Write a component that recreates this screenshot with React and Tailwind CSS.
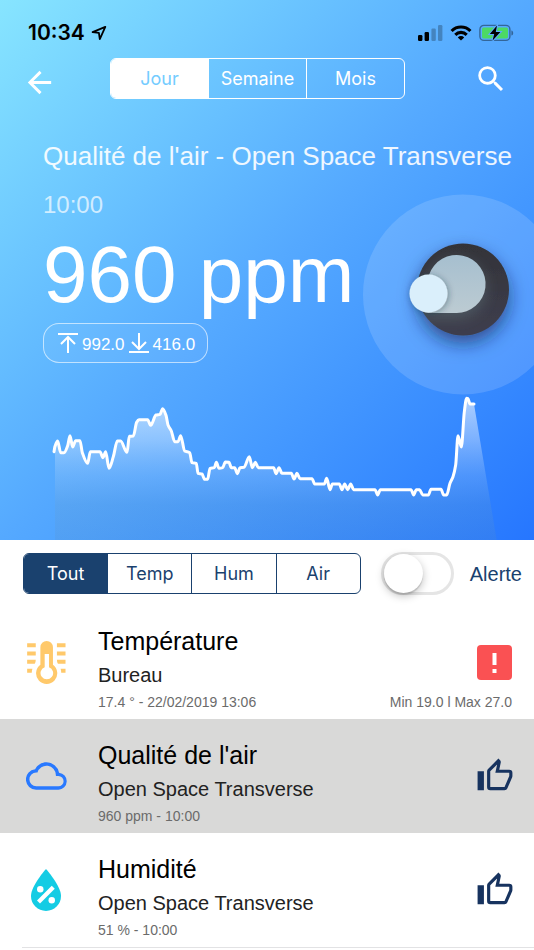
import { useState } from "react";
import { MdArrowBack, MdSearch } from "react-icons/md";
import clsx from "clsx";

// CO2 readings over the day, in chart units (3 units = 1px at full width)
const READINGS = [
  [162, 200], [165, 184], [173, 168], [182, 203], [192, 203], [203, 182], [210, 152], [218, 186], [227, 167],
  [240, 167], [247, 203], [263, 235], [271, 200], [300, 200], [309, 218], [317, 200], [327, 250], [340, 215],
  [352, 168], [362, 168], [381, 202], [388, 154], [400, 153], [410, 112], [417, 104], [443, 104], [452, 121],
  [468, 90], [480, 88], [488, 71], [498, 91], [504, 120], [514, 138], [524, 170], [534, 170], [542, 152],
  [554, 198], [569, 203], [576, 233], [589, 235], [594, 265], [606, 267], [614, 283], [623, 283], [630, 250],
  [643, 248], [649, 232], [657, 250], [668, 248], [676, 231], [687, 232], [694, 248], [704, 248], [712, 266],
  [720, 248], [732, 247], [748, 215], [757, 248], [766, 232], [775, 248], [821, 248], [828, 266], [837, 248],
  [846, 265], [874, 265], [882, 282], [891, 265], [900, 281], [936, 281], [944, 297], [973, 297], [980, 280],
  [990, 314], [997, 297], [1018, 297], [1026, 314], [1034, 297], [1043, 314], [1052, 297], [1061, 314],
  [1125, 314], [1133, 330], [1141, 314], [1233, 314], [1241, 330], [1249, 314], [1259, 314], [1268, 330],
  [1285, 330], [1293, 313], [1323, 313], [1331, 330], [1340, 330], [1350, 295], [1359, 275], [1367, 240],
  [1374, 152], [1384, 186], [1393, 80], [1400, 40], [1404, 41], [1410, 57], [1422, 57],
];

// Monotone cubic through every point, so flat stretches stay flat
function smoothPath(points) {
  const slope = points.slice(1).map((p, i) => (p[1] - points[i][1]) / (p[0] - points[i][0]));
  const tangent = points.map((_, i) => {
    const a = slope[i - 1];
    const b = slope[i];
    if (a === undefined) return b;
    if (b === undefined) return a;
    return a * b <= 0 ? 0 : (2 * a * b) / (a + b);
  });
  let d = `M${points[0][0]} ${points[0][1]}`;
  for (let i = 1; i < points.length; i++) {
    const [x0, y0] = points[i - 1];
    const [x1, y1] = points[i];
    const h = (x1 - x0) / 3;
    d += `C${x0 + h} ${y0 + tangent[i - 1] * h} ${x1 - h} ${y1 - tangent[i] * h} ${x1} ${y1}`;
  }
  return d;
}

const LINE = smoothPath(READINGS);

function Chart() {
  return (
    <svg viewBox="0 0 1602 465" className="block w-full" role="img" aria-label="CO2">
      <defs>
        <linearGradient id="area" x1="0" y1="40" x2="0" y2="465" gradientUnits="userSpaceOnUse">
          <stop offset="0" stopColor="#fff" stopOpacity="0.6" />
          <stop offset="0.3" stopColor="#eef5ff" stopOpacity="0.38" />
          <stop offset="0.55" stopColor="#a8cdf2" stopOpacity="0.24" />
          <stop offset="0.75" stopColor="#6a9fcb" stopOpacity="0.22" />
          <stop offset="1" stopColor="#5a8fc0" stopOpacity="0.18" />
        </linearGradient>
      </defs>
      <path d={`${LINE}L1490 465H165V200Z`} fill="url(#area)" />
      <path d={LINE} fill="none" stroke="#fff" strokeWidth="9" strokeLinecap="round" strokeLinejoin="round" />
    </svg>
  );
}

function StatusBar() {
  return (
    <div className="flex items-center justify-between pt-5 pr-5 pl-7 text-black">
      <div className="flex items-center gap-1.5">
        <span className="font-[Inter,sans-serif] text-[21px] leading-[26px] font-semibold">10:34</span>
        <svg width="16" height="16" viewBox="0 0 16 16" fill="none" stroke="currentColor" strokeWidth="1.8" strokeLinejoin="round">
          <path d="M14.3 1.8 1.6 7.2l6.3.7.9 6.2z" />
        </svg>
      </div>
      <div className="flex items-center gap-[7px]">
        <svg width="25" height="16" viewBox="0 0 25 16" fill="currentColor">
          <rect x="0" y="10" width="4.4" height="6" rx="1.2" />
          <rect x="6.6" y="7" width="4.4" height="9" rx="1.2" />
          <rect x="13.4" y="3.5" width="4.4" height="12.5" rx="1.2" opacity="0.25" />
          <rect x="20" y="0" width="4.4" height="16" rx="1.2" opacity="0.25" />
        </svg>
        <svg width="22" height="16" viewBox="0 0 22 16" fill="none" stroke="currentColor" strokeWidth="3.1">
          <path d="M1.6 6a13.2 13.2 0 0 1 18.8 0" />
          <path d="M5.3 9.8a8 8 0 0 1 11.4 0" />
          <path d="M11 15.6 7.8 12.4a4.6 4.6 0 0 1 6.4 0z" fill="currentColor" stroke="none" />
        </svg>
        <svg width="35" height="18" viewBox="0 0 35 18">
          <rect x="0.9" y="1.4" width="30" height="15" rx="4" fill="none" stroke="#000" strokeOpacity="0.4" strokeWidth="1.4" />
          <path d="M32.4 6.4c2.4.6 2.4 4.6 0 5.2z" fill="#000" fillOpacity="0.4" />
          <rect x="3" y="3.4" width="26" height="11" rx="1.6" fill="#4cd964" />
          <path d="M18 1.6 10.8 10h4.4l-1.6 6.6L21.4 8h-4.6z" fill="#000" stroke="#5aabff" strokeWidth="2" paintOrder="stroke" />
        </svg>
      </div>
    </div>
  );
}

// Ring with the night/day knob that bleeds off the right edge
function Dial() {
  return (
    <svg
      className="pointer-events-none absolute top-[194px] -right-[29px]"
      width="200"
      height="201"
      viewBox="0 0 200 201"
      aria-hidden="true"
    >
      <defs>
        <linearGradient id="dark" x1="0" y1="0" x2="0" y2="1">
          <stop offset="0" stopColor="#333338" />
          <stop offset="1" stopColor="#3e3e4e" />
        </linearGradient>
        <linearGradient id="haze" x1="0" y1="0" x2="0" y2="1">
          <stop offset="0" stopColor="#a6bfcf" />
          <stop offset="1" stopColor="#bccbd2" />
        </linearGradient>
        <filter id="drop" x="-40%" y="-40%" width="180%" height="200%">
          <feDropShadow dx="0" dy="8" stdDeviation="9" floodColor="#0a1e46" floodOpacity="0.6" />
        </filter>
        <filter id="glow" x="-40%" y="-40%" width="180%" height="180%">
          <feDropShadow dx="0" dy="5" stdDeviation="7" floodColor="#5c6f74" floodOpacity="0.55" />
        </filter>
        <filter id="soft" x="-40%" y="-40%" width="180%" height="180%">
          <feDropShadow dx="1" dy="1" stdDeviation="3" floodColor="#1e2d3c" floodOpacity="0.4" />
        </filter>
        <clipPath id="disc">
          <circle cx="100" cy="96" r="46" />
          <path d="M54 60h46v59H64z" />
        </clipPath>
      </defs>
      <circle cx="100" cy="100.5" r="100" fill="#fff" fillOpacity="0.14" />
      <circle cx="100" cy="95.5" r="46" fill="url(#dark)" filter="url(#drop)" />
      <g clipPath="url(#disc)">
        <path d="M66 119a19 19 0 0 1 0-38 29 29 0 1 1 27 38z" fill="url(#haze)" filter="url(#glow)" />
      </g>
      <circle cx="65.5" cy="99.5" r="19" fill="#daeffb" filter="url(#soft)" />
    </svg>
  );
}

function Thermometer() {
  return (
    <svg width="39" height="43" viewBox="0 0 117 130" fill="#ffc96b">
      <path d="M0 7h26v12H0zM0 32h26v12H0zM0 57h26q0 8-3 12H0zM0 84h16q-2 5-2 12H0z" />
      <path d="M90 7h26v12H90zM90 32h26v12H90zM90 57h26v12H93q-3-4-3-12zM101 84h15v12h-13q0-7-2-12z" />
      <path
        fillRule="evenodd"
        d="M40 19a19 19 0 0 1 38 0v53a32 32 0 1 1-38 0zM53 39v40a19 19 0 1 0 13 0V39z"
      />
    </svg>
  );
}

function Cloud() {
  return (
    <svg width="41" height="28" viewBox="0 4 24 16" fill="#2979ff">
      <path d="M19 18H6a4 4 0 0 1 0-8h.71a5.5 5.5 0 0 1 10.79 1.5v.5H19a3 3 0 0 1 0 6m.35-7.97A7.49 7.49 0 0 0 12 4C9.11 4 6.6 5.64 5.35 8.03A6 6 0 0 0 6 20h13a5 5 0 0 0 .35-9.97z" />
    </svg>
  );
}

function Drop() {
  return (
    <svg width="30" height="42" viewBox="6 3.25 12 16.75">
      <path d="M12 3.25S6 10 6 14a6 6 0 0 0 12 0c0-4-6-10.75-6-10.75z" fill="#14cce4" />
      <g fill="#fff">
        <path d="m14.3 9.9 1.2 1.2-5.9 5.9-1.2-1.2z" />
        <circle cx="9.7" cy="11.3" r="1.3" />
        <circle cx="14.3" cy="15.7" r="1.3" />
      </g>
    </svg>
  );
}

function ThumbUp() {
  return (
    <svg width="38" height="38" viewBox="0 0 24 24" fill="#17335f" className="-mr-0.5" role="img" aria-label="OK">
      <path d="M5 9v12H1V9h4m4 12a2 2 0 0 1-2-2V9c0-.55.22-1.05.59-1.41L14.17 1l1.06 1.06c.27.27.44.64.44 1.05l-.03.32L14.69 8H21a2 2 0 0 1 2 2v2c0 .26-.05.5-.14.73l-3.02 7.05C19.54 20.5 18.83 21 18 21H9m0-2h9.03L21 12v-2h-8.79l1.13-5.32L9 9.03V19z" />
    </svg>
  );
}

function Warning() {
  return (
    <svg width="35" height="35" viewBox="0 0 35 35" role="img" aria-label="Alerte">
      <rect width="35" height="35" rx="4" fill="#fa5153" />
      <path d="M15.5 8h4v12h-4zM15.5 24h4v4h-4z" fill="#fff" />
    </svg>
  );
}

function ToTop({ flip }) {
  return (
    <svg
      width="20"
      height="20"
      viewBox="0 0 20 20"
      fill="none"
      stroke="currentColor"
      strokeWidth="2"
      className={clsx("shrink-0", flip && "rotate-180")}
    >
      <path d="M0 1h20M10 20V4M3 11l7-7 7 7" />
    </svg>
  );
}

const SENSORS = [
  { id: "temp", name: "Température", place: "Bureau", meta: "17.4 ° - 22/02/2019 13:06", range: "Min 19.0 l Max 27.0", Icon: Thermometer, Status: Warning },
  { id: "air", name: "Qualité de l'air", place: "Open Space Transverse", meta: "960 ppm - 10:00", Icon: Cloud, Status: ThumbUp },
  { id: "hum", name: "Humidité", place: "Open Space Transverse", meta: "51 % - 10:00", Icon: Drop, Status: ThumbUp },
];

function SensorRow({ sensor, selected, onSelect }) {
  const { name, place, meta, range, Icon, Status } = sensor;
  return (
    <li>
      <button
        type="button"
        onClick={onSelect}
        className={clsx(
          "grid w-full grid-cols-[76px_1fr_auto] pr-[22px] pl-[22px] text-left",
          selected ? "bg-[#d9d9d8]" : "bg-white"
        )}
      >
        <span className="col-start-1 row-span-3 row-start-1 flex w-12 items-center justify-center self-stretch">
          <Icon />
        </span>
        <span className="col-start-2 row-start-1 pt-5 text-[25px] leading-8 text-black">{name}</span>
        <span className="col-start-2 row-start-2 text-[20px] leading-9 text-[#222]">{place}</span>
        <span className="col-start-2 row-start-3 pb-2 text-[14px] leading-[18px] text-[#6b6b6b]">{meta}</span>
        <span className="col-start-3 row-span-3 row-start-1 self-center justify-self-end">
          <Status />
        </span>
        {range && (
          <span className="col-start-3 row-start-3 text-[14px] leading-[18px] text-[#6b6b6b]">{range}</span>
        )}
      </button>
    </li>
  );
}

export default function App() {
  const [period, setPeriod] = useState("Jour");
  const [filter, setFilter] = useState("Tout");
  const [alert, setAlert] = useState(false);
  const [selected, setSelected] = useState("air");

  return (
    <div className="min-h-screen overflow-hidden bg-white font-['Liberation_Sans',Arial,sans-serif]">
      <section className="relative overflow-hidden bg-linear-to-br from-[#87e5ff] via-[#55a9ff] to-[#2676ff] text-white">
        <Dial />
        <StatusBar />

        <header className="mt-[11px] flex items-center pr-[26px] pl-[22px]">
          <button type="button" aria-label="Retour" className="mt-2">
            <MdArrowBack size={35} />
          </button>
          <div className="mr-[69px] ml-[53px] flex h-[41px] flex-1 overflow-hidden rounded-md border border-white font-[Inter,sans-serif] text-[18px]">
            {["Jour", "Semaine", "Mois"].map((label) => (
              <button
                key={label}
                type="button"
                onClick={() => setPeriod(label)}
                className={clsx(
                  "flex-1 border-l border-white first:border-l-0",
                  period === label ? "bg-white text-[#74ccff]" : "text-white"
                )}
              >
                {label}
              </button>
            ))}
          </div>
          <button type="button" aria-label="Rechercher">
            <MdSearch size={34} />
          </button>
        </header>

        <div className="mt-[39px] pl-[43px]">
          <h1 className="text-[26px] leading-[34px] whitespace-nowrap text-white/90">
            Qualité de l'air - Open Space Transverse
          </h1>
          <p className="mt-4 text-[24px] leading-8 text-white/70">10:00</p>
          <p className="mt-1.5 text-[80px] leading-[96px]">960 ppm</p>
          <div className="inline-flex h-10 items-center rounded-2xl border border-white/60 bg-white/5 pr-2 pl-3.5 align-top text-[17px]">
            <ToTop />
            <span className="px-1 pt-1">992.0</span>
            <ToTop flip />
            <span className="px-1 pt-1">416.0</span>
          </div>
        </div>

        <div className="mt-[22px]">
          <Chart />
        </div>
      </section>

      <div className="flex items-center pt-3 pr-3 pb-2.5 pl-[23px] text-[#1a416e]">
        <div className="flex h-[41px] flex-1 overflow-hidden rounded-md border border-[#1a416e] font-[Inter,sans-serif] text-[18px]">
          {["Tout", "Temp", "Hum", "Air"].map((label) => (
            <button
              key={label}
              type="button"
              onClick={() => setFilter(label)}
              className={clsx(
                "flex-1 border-l border-[#1a416e] first:border-l-0",
                filter === label && "bg-[#1a416e] text-white"
              )}
            >
              {label}
            </button>
          ))}
        </div>
        <label className="ml-5 flex items-center text-[20px]">
          <input
            type="checkbox"
            role="switch"
            checked={alert}
            onChange={(e) => setAlert(e.target.checked)}
            className="peer sr-only"
          />
          <span className="mr-4 flex h-[43px] w-[73px] shrink-0 items-center rounded-full border-[3px] border-[#e5e5e5] bg-white peer-checked:justify-end peer-checked:bg-[#1a416e]">
            <span className="size-[39px] rounded-full bg-white shadow-[0_3px_8px_rgba(0,0,0,0.25),0_2px_1px_rgba(0,0,0,0.12)]" />
          </span>
          Alerte
        </label>
      </div>

      <ul>
        {SENSORS.map((sensor) => (
          <SensorRow
            key={sensor.id}
            sensor={sensor}
            selected={selected === sensor.id}
            onSelect={() => setSelected(sensor.id)}
          />
        ))}
      </ul>
      <hr className="ml-[22px] border-[#e2e2e4]" />
    </div>
  );
}
